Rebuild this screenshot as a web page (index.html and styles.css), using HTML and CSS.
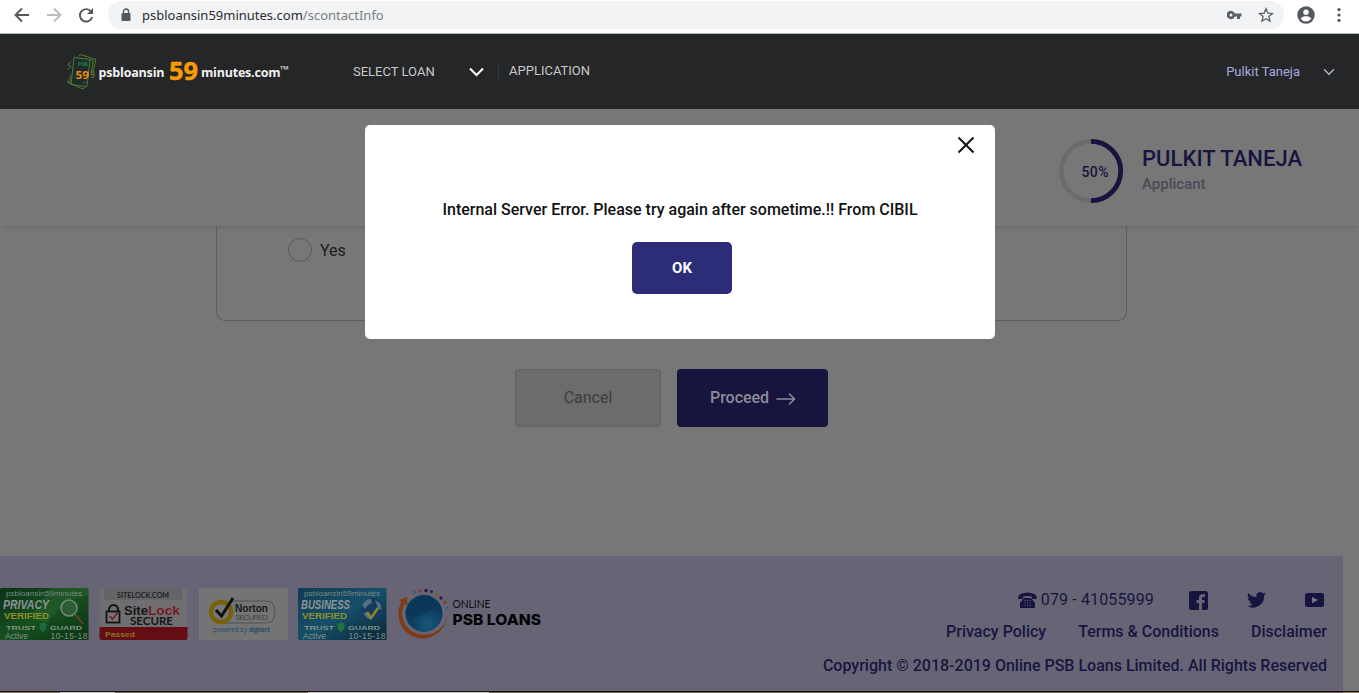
FILE: index.html
```html
<!DOCTYPE html>
<html lang="en">
<head>
<meta charset="utf-8">
<title>psbloansin59minutes.com</title>
<link rel="stylesheet" href="styles.css">
</head>
<body>
<div class="browser">
  <svg class="nav-icons" width="108" height="33" viewBox="0 0 108 33" fill="none" stroke-width="1.9">
    <path d="M29 15H16M22 8.5L15.5 15L22 21.5" stroke="#54575b"/>
    <path d="M47 15H60M54 8.500L60.500 15L54 21.500" stroke="#bdbdbf"/>
    <path d="M91 11.500A6.200 6.200 0 1 0 92.100 17" stroke="#54575b"/>
    <path d="M93 8V14H87Z" fill="#54575b"/>
  </svg>
  <div class="address">
    <svg width="10" height="14" viewBox="0 0 10 14"><path d="M2.500 6V3.500a2.500 2.500 0 0 1 5 0V6" fill="none" stroke="#55585c" stroke-width="1.400"/><rect x=".5" y="5" width="9" height="8" rx="1" fill="#55585c"/></svg>
    <span class="url">psbloansin59minutes.com<span class="path">/scontactInfo</span></span>
    <svg class="key" width="15" height="10" viewBox="0 0 15 10"><path fill="#5c5f63" fill-rule="evenodd" d="M4 .7a4.200 4.200 0 1 0 3.900 5.800H10V9h3V6.500h1.500v-3H7.900A4.200 4.200 0 0 0 4 .7zM4 3.500a1.500 1.500 0 1 1 0 3a1.500 1.500 0 0 1 0-3z"/></svg>
    <svg class="star" width="16" height="16" viewBox="0 0 16 16"><path fill="none" stroke="#5c5f63" stroke-width="1.300" d="M8 1.800l1.800 4.300 4.700.4-3.600 3.100 1.100 4.600L8 11.700l-4 2.500 1.100-4.600L1.500 6.500l4.700-.4z"/></svg>
  </div>
  <svg class="user" width="18" height="18" viewBox="0 0 18 18"><circle cx="9" cy="9" r="8.700" fill="#54575b"/><circle cx="9" cy="6.300" r="2.700" fill="#fff"/><path d="M3.700 12.800c1.100-2 3.300-2.500 5.300-2.500s4.200.5 5.300 2.500a6.500 6.500 0 0 1-10.600 0z" fill="#fff"/></svg>
  <svg class="dots" width="4" height="16" viewBox="0 0 4 16" fill="#54575b"><circle cx="2" cy="2.600" r="1.600"/><circle cx="2" cy="8" r="1.600"/><circle cx="2" cy="13.400" r="1.600"/></svg>
</div>

<header class="header">
  <svg class="logo" width="226" height="40" viewBox="66 52.500 226 40">
    <path d="M74 58h16l-2 27H72z" fill="#202c29"/>
    <g fill="none" stroke="#4c7a35" stroke-width="1">
      <path d="M74 58L90 60L87 87L71 85Z"/>
      <path d="M79 57L80 55L96 60L93 72M90 60L93 61L91 76"/>
      <path d="M71 76L67.500 83L83 89.500L86 87M72 79L69 84"/>
      <path d="M71 62l-3 3 3 2-3 3M91 73q3-2 3 0t-2 2q3 0 2 2t-3 1" stroke="#6b873b"/>
    </g>
    <text x="78" y="66.500" class="logo-psb" textLength="10" lengthAdjust="spacingAndGlyphs">PSB</text>
    <text x="75.500" y="79" class="logo-small" textLength="13.500" lengthAdjust="spacingAndGlyphs">59</text>
    <path d="M82 83h5" stroke="#254a57" stroke-width="1.500"/>
    <text x="98.500" y="77.500" class="logo-word" textLength="66">psbloansin</text>
    <text x="169" y="80.500" class="logo-big" textLength="29" lengthAdjust="spacingAndGlyphs">59</text>
    <text x="201" y="77.500" class="logo-word" textLength="79.500">minutes.com</text>
    <text x="280" y="73" class="logo-tm" textLength="9" lengthAdjust="spacingAndGlyphs">™</text>
  </svg>
  <nav class="menu">
    <span class="select">SELECT LOAN</span>
    <svg width="15" height="10" viewBox="0 0 15 10"><path d="M1 1.500L7.500 8L14 1.500" fill="none" stroke="#fff" stroke-width="2"/></svg>
    <span class="application">APPLICATION</span>
  </nav>
  <div class="account"><span>Pulkit Taneja</span>
    <svg width="12" height="8" viewBox="0 0 12 8"><path d="M1 1.200L6 6.200L11 1.200" fill="none" stroke="#b3b5d8" stroke-width="1.400"/></svg>
  </div>
</header>

<section class="applicant">
  <svg width="66" height="66" viewBox="0 0 66 66"><circle cx="33" cy="33" r="29.700" fill="none" stroke="#6d6a69" stroke-width="4.500"/><path d="M33 3.300a29.700 29.700 0 0 1 0 59.400" fill="none" stroke="#17153f" stroke-width="4.800"/><text x="23.500" y="39" class="percent" textLength="27">50%</text></svg>
  <div class="who"><div class="name">PULKIT TANEJA</div><div class="role">Applicant</div></div>
</section>

<main class="content">
  <div class="card"><span class="radio"></span><span class="yes">Yes</span></div>
  <div class="actions">
    <div class="btn cancel">Cancel</div>
    <div class="btn proceed">Proceed <svg width="20" height="14" viewBox="0 0 20 14"><path d="M.5 7H18.500M13 1.500L18.500 7L13 12.500" fill="none" stroke="#8d8c98" stroke-width="1.500"/></svg></div>
  </div>
</main>

<footer class="footer">
  <div class="badges">
    <svg class="badge" width="89" height="52" viewBox="0 0 89 52">
      <defs><linearGradient id="green" x1="0" y1="0" x2="1" y2="1"><stop offset="0" stop-color="#0c3019"/><stop offset=".5" stop-color="#17501f"/><stop offset="1" stop-color="#08330f"/></linearGradient></defs>
      <rect width="88.500" height="52" rx="1.500" fill="url(#green)"/>
      <path d="M50 0h38v8C70 8 58 20 48 35L30 30Z" fill="#2a622c" opacity=".5"/>
      <text x="6" y="8" class="b-site" textLength="76" lengthAdjust="spacingAndGlyphs">psbloansin59minutes</text>
      <text x="3" y="21" class="b-title" textLength="46" lengthAdjust="spacingAndGlyphs">PRIVACY</text>
      <text x="4" y="30.500" class="b-verified" textLength="45" lengthAdjust="spacingAndGlyphs">VERIFIED</text>
      <circle cx="69" cy="20" r="8" fill="#2c5c34" stroke="#71857a" stroke-width="1.600"/>
      <path d="M75 26L83 36" stroke="#65402d" stroke-width="2"/>
      <text x="6" y="42" class="b-trust" textLength="30" lengthAdjust="spacingAndGlyphs">TRUST</text>
      <text x="50" y="42" class="b-trust" textLength="32" lengthAdjust="spacingAndGlyphs">GUARD</text>
      <path d="M39.500 35.500l3.500-1 3.500 1v4q-1 3-3.500 5-2.500-2-3.500-5z" fill="#1c6843"/>
      <text x="5" y="50.500" class="b-date" textLength="23">Active</text><text x="50.500" y="50.500" class="b-date" textLength="37">10-15-18</text>
    </svg>
    <svg class="badge" width="89" height="52" viewBox="0 0 89 52">
      <rect x=".5" width="88" height="52" rx="2" fill="#6f6f72"/><rect x="5" width="78" height="12" fill="#656569"/>
      <path d="M.5 39h88v11q0 2-2 2h-84q-2 0-2-2z" fill="#640d13"/>
      <text x="18" y="10.300" class="sl-site" textLength="52" lengthAdjust="spacingAndGlyphs">SITELOCK.COM</text>
      <path d="M10 24v-2.500a4.500 4.500 0 0 1 9 0V24" fill="none" stroke="#111" stroke-width="2"/><rect x="7.500" y="23.500" width="13" height="11" fill="#777" stroke="#111" stroke-width="1.800"/><path d="M10.500 28l3 3 5-6" fill="none" stroke="#7b171b" stroke-width="1.600"/>
      <text x="25" y="26.500" class="sl-name" textLength="24" lengthAdjust="spacingAndGlyphs">Site</text><text x="49" y="26.500" class="sl-name red" textLength="32" lengthAdjust="spacingAndGlyphs">Lock</text>
      <text x="31" y="37" class="sl-secure" textLength="43" lengthAdjust="spacingAndGlyphs">SECURE</text>
      <text x="6" y="48.700" class="sl-pass" textLength="30" lengthAdjust="spacingAndGlyphs">Passed</text>
    </svg>
    <svg class="badge" width="89" height="52" viewBox="0 0 89 52">
      <rect width="89" height="52" fill="#747475"/>
      <path d="M32 13H67q9 0 9 11t-9 11H20" fill="none" stroke="#4a4a4c" stroke-width=".8"/>
      <circle cx="22" cy="24" r="10" fill="#777" stroke="#77620a" stroke-width="4.500"/>
      <path d="M17 22l5.500 6L34 10" fill="none" stroke="#111" stroke-width="3"/>
      <text x="36" y="23.500" class="nt-name" textLength="33" lengthAdjust="spacingAndGlyphs">Norton</text><text x="36" y="32" class="nt-secure" textLength="33">SECURED</text>
      <text x="14" y="43.500" class="nt-power" textLength="34" lengthAdjust="spacingAndGlyphs">powered by</text>
      <text x="50" y="43.500" class="nt-power strong" textLength="21" lengthAdjust="spacingAndGlyphs">digicert</text>
    </svg>
    <svg class="badge" width="89" height="52" viewBox="0 0 89 52">
      <defs><linearGradient id="blue" x1="0" y1="0" x2="1" y2="1"><stop offset="0" stop-color="#123b55"/><stop offset=".5" stop-color="#164f69"/><stop offset="1" stop-color="#082536"/></linearGradient></defs>
      <rect width="88.500" height="52" rx="1.500" fill="url(#blue)"/>
      <circle cx="74" cy="21" r="11" fill="#153b60"/><path d="M64 17q4-7 9-6l1 4-4 2-3 4zM77 12l5 3 2 7-4-2zM65 25l5-1 3 6-3 1z" fill="#536f80"/>
      <text x="6" y="8" class="b-site" textLength="76" lengthAdjust="spacingAndGlyphs">psbloansin59minutes</text>
      <text x="3" y="21" class="b-title" textLength="49" lengthAdjust="spacingAndGlyphs">BUSINESS</text>
      <text x="4" y="30.500" class="b-verified" textLength="45" lengthAdjust="spacingAndGlyphs">VERIFIED</text>
      <path d="M69 24l4 6 7-10" fill="none" stroke="#898725" stroke-width="2.500"/>
      <text x="6" y="42" class="b-trust" textLength="30" lengthAdjust="spacingAndGlyphs">TRUST</text>
      <text x="50" y="42" class="b-trust" textLength="32" lengthAdjust="spacingAndGlyphs">GUARD</text>
      <path d="M39.500 35.500l3.500-1 3.500 1v4q-1 3-3.500 5-2.500-2-3.500-5z" fill="#1e7640"/>
      <text x="5" y="50.500" class="b-date" textLength="23">Active</text><text x="50.500" y="50.500" class="b-date" textLength="37">10-15-18</text>
    </svg>
    <svg class="psb" width="146" height="52" viewBox="397 588 146 52">
      <defs><radialGradient id="orb" cx=".6" cy=".8"><stop offset="0" stop-color="#16587b"/><stop offset="1" stop-color="#0b3a5c"/></radialGradient></defs>
      <circle cx="424" cy="613.500" r="18.500" fill="url(#orb)"/><path d="M405.500 613C413 619 420 616 426 613S438 609 442 610A18.500 18.500 0 0 0 405.500 613z" fill="#0b3557" opacity=".65"/>
      <path d="M402 601A24.500 24.500 0 0 0 423 638.500A25 25 0 0 0 447.500 614A23 22 0 0 1 423 634.500A21 21 0 0 1 405 603Z" fill="#813a17"/>
      <path d="M399 600L407 597L407.500 606Z" fill="#813a17"/>
      <g><circle cx="410" cy="596" r="1.500" fill="#7a7038"/><circle cx="414.500" cy="592" r="1.500" fill="#315c87"/><circle cx="420" cy="591" r="1.600" fill="#803622"/><circle cx="426" cy="590.500" r="1.700" fill="#251346"/><circle cx="431.500" cy="591.500" r="1.500" fill="#1c2258"/><circle cx="437" cy="594.500" r="1.600" fill="#7d6220"/><circle cx="441" cy="598" r="1.700" fill="#371445"/><circle cx="445" cy="602.500" r="1.600" fill="#873817"/><circle cx="447" cy="608" r="1.500" fill="#28628a"/></g>
      <text x="452.500" y="607.500" class="psb-top" textLength="38" lengthAdjust="spacingAndGlyphs">ONLINE</text>
      <text x="452.500" y="625" class="psb-main" textLength="88.500" lengthAdjust="spacingAndGlyphs">PSB LOANS</text>
    </svg>
  </div>
  <div class="info">
    <div class="contact">
      <svg width="19" height="17" viewBox="0 0 19 17"><path fill="#17153f" d="M.3 7Q-.5 4 2.500 2Q9.500-1 16.500 2Q19.500 4 18.500 7H14V4.700Q9.500 3.300 5 4.700V7zM6 6h7l4 5v5H2v-5z"/><g fill="#6a6877"><path d="M6.500 8h1v1h-1zM9 8h1v1H9zM11.500 8h1v1h-1zM6.500 10.500h1v1h-1zM9 10.500h1v1H9zM11.500 10.500h1v1h-1zM6.500 13h1v1h-1zM9 13h1v1H9zM11.500 13h1v1h-1z"/></g></svg>
      <span class="phone">079 - 41055999</span>
      <svg class="facebook" width="19" height="19" viewBox="0 0 19 19"><rect width="19" height="19" rx="2.500" fill="#17153f"/><path d="M10 19v-7H7.500V9H10V7q0-4 3.800-4h2v3h-1.500q-1.300 0-1.300 1.300V9h2.700l-.4 3H13v7z" fill="#676575"/></svg>
      <svg class="twitter" width="19" height="16" viewBox="0 0 24 20"><path fill="#17153f" d="M24 2.400c-.9.400-1.800.7-2.800.8 1-.6 1.800-1.600 2.200-2.700-1 .6-2 1-3.100 1.200A4.900 4.900 0 0 0 11.900 6.200 14 14 0 0 1 1.700 1a4.900 4.900 0 0 0 1.500 6.600c-.8 0-1.600-.2-2.200-.6 0 2.300 1.600 4.400 3.900 4.900-.7.200-1.500.2-2.200.1a4.900 4.900 0 0 0 4.600 3.400A9.900 9.900 0 0 1 0 17.400 14 14 0 0 0 21.500 5c1-.7 1.800-1.600 2.500-2.600z"/></svg>
      <svg class="youtube" width="19" height="14" viewBox="0 0 19 14"><rect width="19" height="14" rx="2.500" fill="#17153f"/><path d="M7 4l6 3-6 3.200z" fill="#777583"/></svg>
    </div>
    <div class="links"><span>Privacy Policy</span><span>Terms &amp; Conditions</span><span>Disclaimer</span></div>
    <div class="copyright">Copyright © 2018-2019 Online PSB Loans Limited. All Rights Reserved</div>
  </div>
</footer>
<div class="desktop-edge"></div>

<div class="modal">
  <svg class="close" width="18" height="18" viewBox="0 0 18 18"><path d="M1.500 1.500L16.500 16.500M16.500 1.500L1.500 16.500" stroke="#111" stroke-width="2"/></svg>
  <div class="message">Internal Server Error. Please try again after sometime.!! From CIBIL</div>
  <div class="ok">OK</div>
</div>
</body>
</html>
```
FILE: styles.css
```css
* { box-sizing: border-box; }
body { margin: 0; width: 1359px; height: 693px; overflow: hidden; position: relative; display: flex; flex-direction: column; background: #777; font-family: Roboto, "Liberation Sans", sans-serif; white-space: nowrap; }
svg { display: block; flex: none; }
.browser { height: 34px; flex: none; display: flex; align-items: flex-start; background: #fff; border-bottom: 1px solid #adb2b3; }
.address { width: 1176px; height: 28px; margin-top: 1px; border-radius: 14px; background: #f1f3f4; display: flex; align-items: center; padding-left: 13px; }
.url { margin-left: 11px; font: 13px/20px "Noto Sans", sans-serif; color: #2b2d31; }
.path { color: #7b7e82; }
.key { margin-left: auto; }
.star { margin: 0 10px 0 16px; }
.user { margin: 6px 0 0 13px; }
.dots { margin: 7px 0 0 22px; }

.header { height: 75px; flex: none; background: #252627; display: flex; align-items: center; padding-left: 66px; }
.logo-word { font: bold 12.500px "Open Sans", sans-serif; fill: #f1f1f1; }
.logo-big { font: bold 25px "Open Sans", sans-serif; fill: #f99b08; stroke: #f99b08; stroke-width: .5px; }
.logo-small { font: bold 10px "Open Sans", sans-serif; fill: #ee8a14; }
.logo-psb { font: bold 5px "Open Sans", sans-serif; fill: #178344; }
.logo-tm { font: bold 10px "Open Sans", sans-serif; fill: #ddd; }
.menu { margin-left: 61px; display: flex; align-items: center; font-size: 13px; color: #c9c9c9; }
.select { width: 116px; }
.application { margin-left: 14px; padding-left: 10px; line-height: 16px; border-left: 1px solid #36383c; padding-bottom: 2px; }
.account { margin-left: auto; margin-right: 24px; display: flex; align-items: center; gap: 23px; color: #a5abe0; font-size: 13px; }

.applicant { height: 117px; flex: none; display: flex; justify-content: flex-end; align-items: flex-start; padding: 29px 57px 0 0; box-shadow: 0 3px 4px -2px #676767; }
.percent { font: 500 14px Roboto, sans-serif; fill: #17153f; }
.who { margin-left: 18px; width: 160px; }
.name { margin-top: 7px; font-size: 22px; line-height: 27px; font-weight: 500; letter-spacing: .04px; color: #17153f; }
.role { margin-top: 1px; font-size: 15px; line-height: 22px; font-weight: 500; color: #4b4b57; }

.content { height: 330px; flex: none; }
.card { width: 911px; height: 95px; margin-left: 216px; border: 1px solid #5e5e5e; border-top: 0; border-radius: 0 0 9px 9px; display: flex; padding: 12px 0 0 71px; gap: 8px; line-height: 24px; font-size: 16px; color: #1c1c1c; }
.radio { width: 24px; height: 24px; border: 1px solid #5a5a5a; border-radius: 50%; }
.yes { padding-top: 1px; }
.actions { display: flex; gap: 16px; margin: 48px 0 0 515px; }
.btn { height: 58px; border-radius: 4px; display: flex; align-items: center; justify-content: center; padding-bottom: 2px; font-size: 16px; }
.cancel { width: 146px; background: #6c6c6c; border: 1px solid #606060; color: #3d3d3d; }
.proceed { width: 151px; background: #17153e; color: #8d8c98; gap: 7px; font-weight: 500; letter-spacing: -.05px; padding-left: 1px; }
.proceed svg { margin-top: 3px; }

.footer { width: 1343px; height: 135px; flex: none; background: #676575; display: flex; justify-content: space-between; padding: 32px 16px 0 0; }
.badges { display: flex; gap: 10.300px; align-items: flex-start; }
.b-site { font: 8px "Liberation Sans", sans-serif; fill: #778984; }
.b-title { font: italic bold 12px "Liberation Sans", sans-serif; fill: #8c9496; }
.b-verified { font: bold 9px "Liberation Sans", sans-serif; fill: #8c9229; }
.b-trust { font: bold 6px "Liberation Sans", sans-serif; fill: #829387; }
.b-date { font: 8.500px "Liberation Sans", sans-serif; fill: #83918b; }
.sl-site { font: bold 7px Lato, sans-serif; fill: #1f2023; }
.sl-name { font: bold 13px "Liberation Sans", sans-serif; fill: #151515; }
.red { fill: #771b22; }
.sl-secure { font: bold 10.500px Lato, sans-serif; fill: #151515; }
.sl-pass { font: bold 8px "Liberation Sans", sans-serif; fill: #8f702c; }
.nt-name { font: bold 11px "Liberation Sans", sans-serif; fill: #18191b; }
.nt-secure { font: 7.500px "Liberation Sans", sans-serif; fill: #414245; }
.nt-power { font: 6.500px "Open Sans", sans-serif; fill: #204867; }
.strong { font-weight: bold; }
.psb-top { font: 10.500px Lato, sans-serif; fill: #0d0d12; }
.psb-main { font: 800 15px Inter, sans-serif; fill: #050507; }
.info { display: flex; flex-direction: column; align-items: flex-end; font-size: 16px; font-weight: 500; color: #17153f; }
.contact { height: 24px; display: flex; align-items: center; padding-right: 3px; }
.phone { margin-left: 4px; padding-bottom: 2px; font-weight: 400; letter-spacing: .14px; }
.facebook { margin-left: 35px; }
.twitter { margin-left: 39px; }
.youtube { margin-left: 39px; }
.links { margin-top: 8px; display: flex; gap: 32px; line-height: 24px; }
.copyright { margin-top: 10px; line-height: 24px; }
.desktop-edge { height: 2px; flex: none; border-top: 1px solid #15100e; background: linear-gradient(90deg, #887368 0 60px, #cac8c7 60px 115px, #78655c 115px 308px, #c8c7c8 308px 489px, #71604f 489px 1343px, #9a7b55 1343px); }

.modal { position: absolute; left: 365px; top: 125px; width: 630px; height: 214px; border-radius: 5px; background: #fff; display: flex; flex-direction: column; align-items: center; }
.close { margin: 11px 20px 0 auto; }
.message { margin-top: 44px; line-height: 24px; font-size: 16px; font-weight: 500; color: #111; }
.ok { width: 100px; height: 52px; margin: 20px 0 0 4px; border-radius: 5px; background: #2d2c79; color: #fff; font-size: 15px; font-weight: 700; line-height: 52px; text-align: center; }
```
